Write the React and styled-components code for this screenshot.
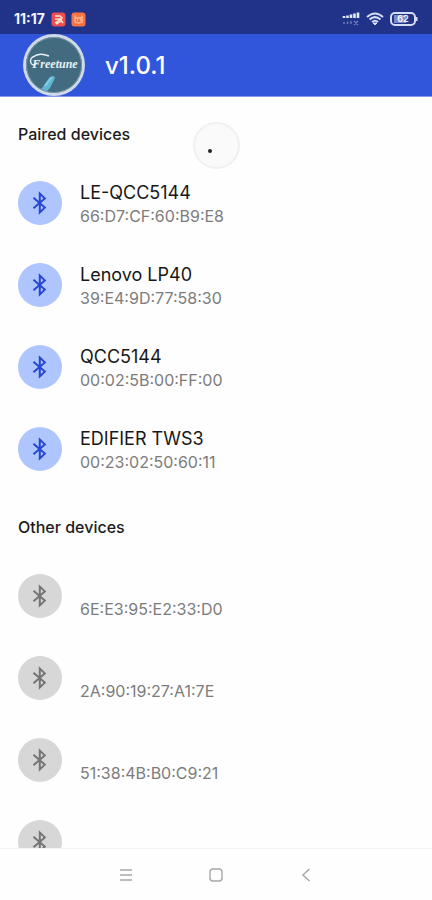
import React from "react";
import styled, { createGlobalStyle } from "styled-components";

const GlobalStyle = createGlobalStyle`
  * { box-sizing: border-box; }
  body { margin: 0; background: #fefefe; font-family: Inter, "Noto Sans", sans-serif; }
  button { font: inherit; color: inherit; border: 0; background: none; padding: 0; cursor: pointer; }
`;

const Screen = styled.div`
  position: relative;
  display: flex;
  flex-direction: column;
  height: 100vh;
  background: #fefefe;
  overflow: hidden;
`;

const StatusBar = styled.div`
  display: flex;
  align-items: center;
  justify-content: space-between;
  flex: none;
  height: 34px;
  padding: 4px 14px 0;
  background: #213388;
  color: #f2f4ff;
`;

const StatusGroup = styled.div`
  display: flex;
  align-items: center;
  gap: 6px;
`;

const Clock = styled.time`
  font-size: 14px;
  line-height: 18px;
  font-weight: 700;
`;

const AppBar = styled.header`
  display: flex;
  align-items: center;
  gap: 19px;
  flex: none;
  height: 63px;
  padding: 0 22px;
  background: #3156dc;
  border-bottom: 1px solid #8799e6;
`;

const Version = styled.h1`
  margin: 0;
  padding-top: 2px;
  color: #fff;
  font-size: 24px;
  line-height: 28px;
  font-weight: 500;
`;

const Content = styled.main`
  flex: 1;
  min-height: 0;
  overflow-y: auto;
  scrollbar-width: none;
`;

const SectionTitle = styled.h2`
  margin: 0;
  padding: 27px 18px 17px;
  color: #1c1c1c;
  font-size: 16px;
  line-height: 21px;
  font-weight: 500;
`;

const DeviceList = styled.ul`
  margin: 0;
  padding: 0;
  list-style: none;
`;

const DeviceRow = styled.button`
  display: flex;
  align-items: center;
  gap: 18px;
  width: 100%;
  height: 82px;
  padding: 0 18px;
  text-align: left;
`;

const Badge = styled.span`
  display: grid;
  place-items: center;
  flex: none;
  width: 44px;
  height: 44px;
  border-radius: 50%;
  background: ${(p) => (p.$paired ? "#aec5fd" : "#d7d7d7")};
  color: ${(p) => (p.$paired ? "#2747cf" : "#757575")};
`;

const DeviceText = styled.span`
  display: grid;
  grid-template-rows: 24px 22px;
  padding-top: 2px;
`;

const DeviceName = styled.span`
  color: #171717;
  font-size: 18px;
  line-height: 24px;
`;

const DeviceAddress = styled.span`
  color: #7c7c7c;
  font-size: 16px;
  line-height: 22px;
`;

const NavBar = styled.nav`
  display: flex;
  justify-content: center;
  align-items: center;
  gap: 66px;
  flex: none;
  height: 52px;
  border-top: 1px solid #f3f3f3;
  color: #a8a8a8;
`;

const NavButton = styled.button`
  display: grid;
  place-items: center;
  width: 24px;
  height: 24px;
`;

const TouchPoint = styled.div`
  position: absolute;
  top: 122px;
  left: 50%;
  width: 47px;
  height: 47px;
  margin-left: -23px;
  border: 2px solid #f0f0f0;
  border-radius: 50%;
  background: #fafafa;
  pointer-events: none;

  &::after {
    content: "";
    position: absolute;
    left: 13px;
    top: 25px;
    width: 4px;
    height: 4px;
    border-radius: 50%;
    background: #222;
  }
`;

function BluetoothIcon() {
  return (
    <svg width="24" height="24" viewBox="0 0 24 24" fill="none" stroke="currentColor" strokeWidth="2" aria-hidden="true">
      <path d="M5.500 6.800 16.800 16.600 11.800 21.400V2.600L16.800 7.400 5.500 17.200" />
    </svg>
  );
}

function Logo() {
  return (
    <svg width="64" height="62" viewBox="0 0 64 62" role="img" aria-label="Freetune">
      <defs>
        <clipPath id="logo-face"><circle cx="32" cy="31" r="28" /></clipPath>
      </defs>
      <circle cx="32" cy="31" r="31" fill="#cfd9e7" />
      <circle cx="32" cy="31" r="28" fill="#426b80" />
      <g clipPath="url(#logo-face)">
        <path d="M18 57 27 44Q32 40 33 44L28 54 22 60Z" fill="#60b5d3" />
        <path d="M23 52 30 43" stroke="#86cfe3" strokeWidth="2" />
      </g>
      <circle cx="32" cy="31" r="27.500" fill="none" stroke="#7796a5" />
      <path d="M13 22Q7 24 9 29Q11 33 15 29M11 23Q17 18 27 22" fill="none" stroke="#e7f2f4" strokeWidth="1.400" />
      <text x="33" y="34" textAnchor="middle" fontFamily="Liberation Serif, serif" fontSize="12" fontStyle="italic" fontWeight="700" fill="#e7f2f4">Freetune</text>
    </svg>
  );
}

function NoticeIcons() {
  return (
    <svg width="35" height="15" viewBox="0 0 35 15" aria-hidden="true">
      <rect x="0.5" y="0.5" width="14" height="14" rx="3" fill="#ee4e50" />
      <path d="M4 4h5l2 2-4 3-3 2M4 7h7M9 7l3 4M5 12l5-3" fill="none" stroke="#ffe1cf" strokeWidth="1.500" />
      <rect x="20.500" y="0.5" width="14" height="14" rx="3" fill="#fb7342" />
      <path d="M24 3.500v2.500h7V3.500M24 6v4q3.500 2 7 0V6M26 8h1M29 8h1" fill="none" stroke="#ffc0a0" strokeWidth="1.300" />
    </svg>
  );
}

function SignalIcon() {
  return (
    <svg width="18" height="14" viewBox="0 0 18 14" aria-hidden="true">
      <path d="M2 4v2M5.500 3.500V6M9 2.500V6M12.500 1.500V6M16 .5V6" stroke="#e5e9ff" strokeWidth="2.600" />
      <path d="M2 10v2M5.500 9.500V12M9 9v3M12 9l4 4M16 9l-4 4" stroke="#6675b3" strokeWidth="1.600" />
    </svg>
  );
}

function WifiIcon() {
  return (
    <svg width="18" height="14" viewBox="0 0 18 14" fill="none" stroke="#d5dcfa" strokeWidth="2" aria-hidden="true">
      <path d="M1 5Q9-2 17 5M3.500 7.500Q9 2.800 14.500 7.500M6 10Q9 7.500 12 10" />
      <path d="m7 11 2 2 2-2Z" fill="#d5dcfa" strokeWidth="1" />
    </svg>
  );
}

function BatteryIcon() {
  return (
    <svg width="28" height="14" viewBox="0 0 28 14" role="img" aria-label="Battery 62 percent">
      <rect x="1" y="1" width="24" height="12" rx="4" fill="none" stroke="#d5dcfa" strokeWidth="2" />
      <path d="M4 3h12v8H4Z" fill="#7c8bc4" />
      <path d="M26 5v4" stroke="#d5dcfa" strokeWidth="3" />
      <text x="13" y="10" textAnchor="middle" fontFamily="Inter, sans-serif" fontWeight="700" fontSize="9" fill="#f0f3ff">62</text>
    </svg>
  );
}

const paired = [
  { name: "LE-QCC5144", address: "66:D7:CF:60:B9:E8" },
  { name: "Lenovo LP40", address: "39:E4:9D:77:58:30" },
  { name: "QCC5144", address: "00:02:5B:00:FF:00" },
  { name: "EDIFIER TWS3", address: "00:23:02:50:60:11" },
];

const others = [
  { id: 1, address: "6E:E3:95:E2:33:D0" },
  { id: 2, address: "2A:90:19:27:A1:7E" },
  { id: 3, address: "51:38:4B:B0:C9:21" },
  { id: 4, address: "" },
];

function Device({ name, address, isPaired }) {
  return (
    <li>
      <DeviceRow type="button" aria-label={name || address || "Unknown device"}>
        <Badge $paired={isPaired}><BluetoothIcon /></Badge>
        <DeviceText>
          <DeviceName>{name}</DeviceName>
          <DeviceAddress>{address}</DeviceAddress>
        </DeviceText>
      </DeviceRow>
    </li>
  );
}

export default function App() {
  return (
    <Screen>
      <GlobalStyle />
      <StatusBar>
        <StatusGroup>
          <Clock>11:17</Clock>
          <NoticeIcons />
        </StatusGroup>
        <StatusGroup>
          <SignalIcon />
          <WifiIcon />
          <BatteryIcon />
        </StatusGroup>
      </StatusBar>
      <AppBar>
        <Logo />
        <Version>v1.0.1</Version>
      </AppBar>
      <Content>
        <SectionTitle>Paired devices</SectionTitle>
        <DeviceList>
          {paired.map((d) => <Device key={d.address} {...d} isPaired />)}
        </DeviceList>
        <SectionTitle>Other devices</SectionTitle>
        <DeviceList>
          {others.map((d) => <Device key={d.id} address={d.address} />)}
        </DeviceList>
      </Content>
      <NavBar>
        <NavButton type="button" aria-label="Recent apps">
          <svg width="14" height="14" viewBox="0 0 14 14" stroke="currentColor" strokeWidth="1.300"><path d="M1 2h12M1 7h12M1 12h12" /></svg>
        </NavButton>
        <NavButton type="button" aria-label="Home">
          <svg width="14" height="14" viewBox="0 0 14 14" fill="none" stroke="currentColor" strokeWidth="1.400"><rect x="1" y="1" width="12" height="12" rx="3" /></svg>
        </NavButton>
        <NavButton type="button" aria-label="Back">
          <svg width="14" height="14" viewBox="0 0 14 14" fill="none" stroke="currentColor" strokeWidth="1.500"><path d="M10.500 1 4 7l6.500 6" /></svg>
        </NavButton>
      </NavBar>
      <TouchPoint />
    </Screen>
  );
}
